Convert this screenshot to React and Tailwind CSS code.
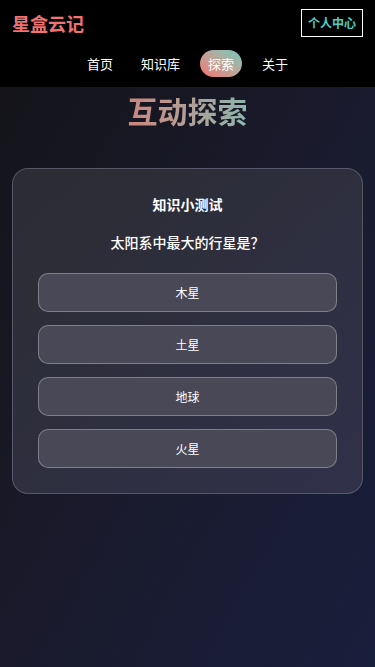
import React from 'react';

const font = { fontFamily: '"Noto Sans CJK SC", "Noto Sans", sans-serif' };

const options = ['木星', '土星', '地球', '火星'];

export default function App() {
  return (
    <div
      className="min-h-[667px] bg-gradient-to-br from-[#131317] via-[#1a1a2c] to-[#181f3c] text-white"
      style={font}
    >
      <header className="bg-black px-3 pt-[9px] pb-[10px]">
        <div className="flex items-center justify-between h-7">
          <div className="text-[18px] font-bold text-[#f07272] leading-none">星盒云记</div>
          <button className="h-7 px-[6px] border border-white text-[#4ecdc4] text-[12px] font-bold leading-none">
            个人中心
          </button>
        </div>
        <nav className="mt-[13px] flex items-center justify-center gap-3 text-[13px]">
          <a className="px-2 h-[27px] flex items-center">首页</a>
          <a className="px-2 h-[27px] flex items-center">知识库</a>
          <a className="px-2 h-[27px] flex items-center rounded-full bg-gradient-to-tr from-[#f07070] to-[#62cbc0]">
            探索
          </a>
          <a className="px-2 h-[27px] flex items-center">关于</a>
        </nav>
      </header>

      <main className="px-3">
        <h1 className="mt-[5px] text-center text-[30px] leading-[36px] font-bold">
          <span className="bg-gradient-to-r from-[#cc857e] to-[#8bb6ad] bg-clip-text text-transparent">
            互动探索
          </span>
        </h1>

        <section className="mt-[40px] rounded-2xl border border-white/20 bg-gradient-to-br from-[#2c2c33] to-[#30314a] px-[25px] pt-[25px] pb-[25px]">
          <h2 className="text-center text-sm font-bold leading-5">知识小测试</h2>
          <p className="mt-[18px] text-center text-sm font-medium leading-5">太阳系中最大的行星是？</p>
          <div className="mt-[21px] flex flex-col gap-[13px]">
            {options.map((o) => (
              <button
                key={o}
                className="h-[39px] rounded-[10px] border border-white/30 bg-[#484857] text-xs text-white"
              >
                {o}
              </button>
            ))}
          </div>
        </section>
      </main>
    </div>
  );
}
